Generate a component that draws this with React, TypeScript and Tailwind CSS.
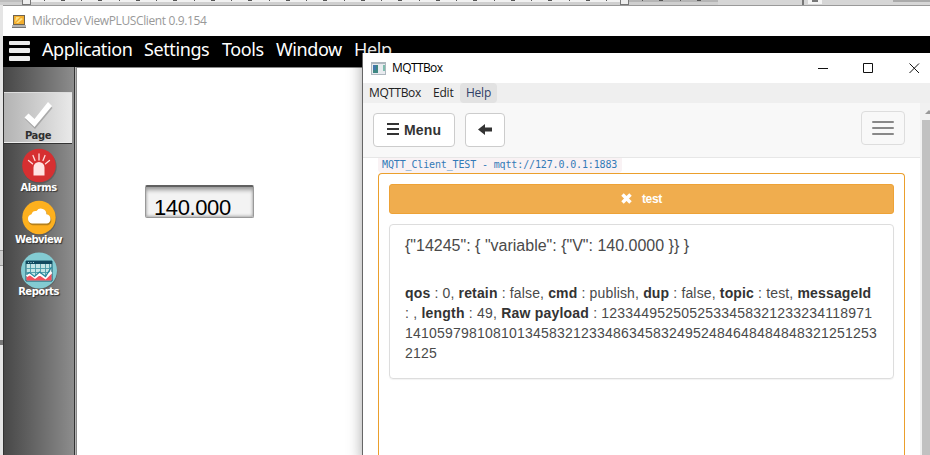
import React from "react";

const segoe = "font-['Open_Sans','Noto_Sans',sans-serif]";
const arial = "font-['Liberation_Sans',Arial,sans-serif]";

function Ruler() {
  const ticks = Array.from({ length: 50 }, (_, i) => i);
  return (
    <div className="relative h-[5px] w-full overflow-hidden bg-[#cfcfcf]">
      <div className="flex h-[2px] gap-[16.25px] bg-[#f1f1f1] pl-[6px]">
        {ticks.map((i) => (
          <i key={i} className={i % 2 ? "h-px w-[4px] shrink-0 bg-[#555]" : "h-px w-px shrink-0 bg-[#555]"} />
        ))}
      </div>
      <div className="absolute left-0 top-0 h-[2px] w-[26px] bg-[#bdbdbd]" />
      <div className="absolute left-[22px] top-0 h-[5px] w-[9px] border border-t-0 border-[#777] bg-[#eee]" />
      <div className="absolute left-[629px] top-0 flex h-[2px] w-[90px] gap-[16.25px] bg-[#b5b5b5] pl-[13px]">
        <i className="h-px w-px bg-[#555]" /><i className="h-px w-[4px] bg-[#555]" /><i className="h-px w-px bg-[#555]" /><i className="h-px w-[4px] bg-[#555]" />
      </div>
      <div className="absolute left-[718px] top-0 h-[5px] w-[212px] bg-[#d6d6d6]" />
      <div className="absolute left-[620px] top-0 h-[5px] w-[9px] border border-t-0 border-[#777] bg-[#eee]" />
      <div className="absolute left-[802px] top-0 h-[5px] w-[2px] bg-[#777]" />
      <div className="absolute left-[808px] top-0 h-[4px] w-[14px] bg-[#f5f5f5]" />
      <div className="absolute left-[812px] top-0 h-[2px] w-[6px] bg-[#777]" />
      <div className="absolute left-[893px] top-0 h-[2px] w-[37px] bg-[#aaa]" />
    </div>
  );
}

function AlarmIcon() {
  return (
    <svg className="h-[36px] w-[36px]" viewBox="0 0 36 36">
      <circle cx="18.7" cy="18.8" r="17" fill="#444" opacity=".45" />
      <circle cx="18" cy="17.5" r="16.8" fill="#d62f31" />
      <path d="M12.5 27.5V19.5a5.5 5.5 0 0 1 11 0v8z" fill="#ffe3e3" />
      <g stroke="#ffdede" strokeWidth="1.3" strokeLinecap="round">
        <path d="M18 6v6M12 7.5l2 5M24 7.5l-2 5M7.5 12.5l4 3.3M28.5 12.5l-4 3.3" />
      </g>
    </svg>
  );
}

function CloudIcon() {
  return (
    <svg className="h-[36px] w-[36px]" viewBox="0 0 36 36">
      <circle cx="18.7" cy="18.8" r="16.6" fill="#444" opacity=".45" />
      <circle cx="18" cy="17.5" r="16.7" fill="#fdb01e" />
      <path d="M11 24.5a5 5 0 0 1-.5-9.8 4.5 4.5 0 0 1 5-3.2 5.5 5.5 0 0 1 10 3 5.2 5.2 0 0 1 .5 10z" fill="#7a5a1a" opacity=".55" transform="translate(.8 .8)" />
      <path d="M11 23.5a4.7 4.7 0 0 1-.5-9.2 4.5 4.5 0 0 1 5-3.3 5.5 5.5 0 0 1 10 3.3 4.7 4.7 0 0 1 .5 9.2z" fill="#fff" />
    </svg>
  );
}

function ChartIcon() {
  return (
    <svg className="h-[38px] w-[38px]" viewBox="0 0 38 38">
      <circle cx="19.5" cy="20" r="17.8" fill="#444" opacity=".4" />
      <circle cx="19" cy="18.5" r="18" fill="#83cbd2" />
      <path d="M6 9h26v20H6z" fill="#c5e6e6" stroke="#17566b" />
      <path d="M6 9h26v3H6z" fill="#124b60" />
      <path d="M8 10.5h1M10.5 10.5h1M13 10.5h1" stroke="#9bd2da" />
      <path d="M10.5 12v16M15.5 12v16M20.5 12v16M25.5 12v16M29.5 12v16M6 16.5h26M6 20.5h26M6 24.5h26" stroke="#4a9ba8" strokeWidth=".9" />
      <path d="M6.5 28.5v-4l3.5-1.5 5 3 4.5-2.5 6 3 6-6v8z" fill="#f2505c" />
      <path d="M6.5 24l3.5-2 5 3.5 4.5-3.5 6 4 6-6" fill="none" stroke="#fff" strokeWidth="2.5" />
      <path d="M6.5 22.5l3-2 5 4 5-4.5 6 4.5 6-9.5" fill="none" stroke="#27879c" strokeWidth="1.3" />
    </svg>
  );
}

function SideItem({ label, children }: { label: string; children: React.ReactNode }) {
  return (
    <div className="flex h-[52px] w-[69px] flex-col items-center">
      <div className="flex h-[34px] items-start justify-center">{children}</div>
      <span className="z-10 text-[10px] font-bold leading-[12px] tracking-[-0.5px] text-white [text-shadow:1px_1px_1px_#333]">{label}</span>
    </div>
  );
}

function Sidebar() {
  return (
    <aside className="flex w-[73px] shrink-0 border-r border-[#b5b5b5] font-['DejaVu_Sans',sans-serif]">
      <div className="flex flex-1 flex-col border-l border-r border-l-[#333] border-r-[#333] bg-linear-to-r from-[#484848] to-[#8d8d8d]">
        <div className="h-[25px]" />
        <div className="flex h-[51px] w-[68px] flex-col items-center border-t border-b border-t-[#ddd] border-b-[#eee] bg-linear-to-r from-[#b3b3b3] to-[#e9e9e9]">
          <svg className="mt-[7px] h-[30px] w-[30px] shrink-0" viewBox="0 0 30 30">
            <path d="M1.5 18l4-4 5.5 6L25 3l4 4-17.5 21z" fill="#777" opacity=".45" transform="translate(.5 1)" />
            <path d="M1.5 17.5l4-4 6 5.5L25 2l4 4-17.5 21z" fill="#fff" />
          </svg>
          <span className="text-[10px] font-bold leading-[12px] tracking-[-0.4px] text-[#303030]">Page</span>
        </div>
        <div className="h-[5px] w-[68px] border-t border-[#333]" />
        <SideItem label="Alarms"><AlarmIcon /></SideItem>
        <SideItem label="Webview"><CloudIcon /></SideItem>
        <SideItem label="Reports"><ChartIcon /></SideItem>
      </div>
    </aside>
  );
}

function ClientWindow() {
  return (
    <section className="absolute left-[3px] top-[5px] flex h-[450px] w-[927px] flex-col border-t border-[#999] bg-white">
      <header className="flex h-[30px] shrink-0 items-center pl-[9px]">
        <svg className="h-[13px] w-[14px]" viewBox="0 0 14 13">
          <path d="M1 0h12v10H1z" fill="#6f6451" />
          <path d="M2 1h10v8H2z" fill="#f3ae2e" />
          <path d="M4 2h4L3 7zM9 3l2 1-5 4H4z" fill="#ffe184" />
          <path d="M0 10h14v2H0z" fill="#b3b3b3" /><path d="M0 12h14v1H0z" fill="#777" />
        </svg>
        <span className={`${segoe} ml-[6px] whitespace-nowrap text-[12px] tracking-[-0.38px] text-[#999]`}>Mikrodev ViewPLUSClient 0.9.154</span>
      </header>
      <nav className="flex h-[31px] shrink-0 bg-black pl-[6px] font-['Noto_Sans',sans-serif] text-[18px] leading-[26px] text-white">
        <div className="mt-[5px] flex w-[33px] flex-col gap-[3px]">
          <i className="h-[4px] w-[21px] rounded-[1px] bg-[#ededed]" />
          <i className="h-[5px] w-[21px] rounded-[1px] bg-[#ededed]" />
          <i className="h-[5px] w-[21px] rounded-[1px] bg-[#ededed]" />
        </div>
        <span className="w-[102px] tracking-[-0.4px]">Application</span>
        <span className="w-[78px] tracking-[-0.4px]">Settings</span>
        <span className="w-[54px] tracking-[-0.4px]">Tools</span>
        <span className="w-[78px] tracking-[-0.4px]">Window</span>
        <span className="tracking-[-0.4px]">Help</span>
      </nav>
      <div className="flex flex-1">
        <Sidebar />
        <main className="flex flex-1 items-start border-l border-t border-[#888] bg-white pl-[68px] pt-[117px]">
          <div className={`${arial} h-[33px] w-[109px] rounded-[2px] border border-t-2 border-[#999] border-t-[#606060] bg-[#f3f3f3] pl-[8px] text-[22px] leading-[41px] tracking-[-0.4px] text-black shadow-[inset_0_4px_4px_-1px_#999,inset_0_-1px_3px_#aaa]`}>140.000</div>
        </main>
      </div>
    </section>
  );
}

function MessageCard() {
  return (
    <article className="mt-[10px] h-[155px] rounded-[4px] border border-[#ddd] px-[15px] pt-[10px] text-[#4a4a4a] shadow-[0_1px_1px_rgba(0,0,0,.05)]">
      <p className="whitespace-nowrap text-[16px] leading-[22px]">{'{"14245": { "variable": {"V": 140.0000 }} }'}</p>
      <div className="mt-[26px] whitespace-nowrap text-[14px] leading-[20px] [&_b]:text-[#333]">
        <p className="tracking-[0.155px]"><b>qos</b> : 0, <b>retain</b> : false, <b>cmd</b> : publish, <b>dup</b> : false, <b>topic</b> : test, <b>messageId</b></p>
        <p className="tracking-[0.21px]">: , <b>length</b> : 49, <b>Raw payload</b> : 1233449525052533458321233234118971</p>
        <p className="tracking-[0.215px]">14105979810810134583212334863458324952484648484848321251253</p>
        <p className="tracking-[0.2px]">2125</p>
      </div>
    </article>
  );
}

function MqttWindow() {
  return (
    <section className={`${arial} absolute left-[362px] top-[53px] flex h-[402px] w-[568px] flex-col overflow-hidden border-l border-[#666] bg-white`}>
      <header className="flex h-[30px] shrink-0 items-center pl-[8px] text-black">
        <svg className="h-[13px] w-[15px]" viewBox="0 0 15 13">
          <path d="M0 0h15v13H0z" fill="#aeb7be" /><path d="M1 2h13v10H1z" fill="#e8ebef" />
          <path d="M2 3h5v8H2z" fill="#3e8783" /><path d="M2 3h3v5H2z" fill="#4378ab" />
          <path d="M12 3h2v6h-2z" fill="#7ebcad" />
        </svg>
        <span className={`${segoe} ml-[6px] text-[12px] tracking-[-0.6px]`}>MQTTBox</span>
        <svg className="ml-auto mr-[10px] h-[11px] w-[102px]" viewBox="0 0 102 11" fill="none" stroke="#111">
          <path d="M0 5.5h10M45.5.5h9v9h-9zM91.500.5l9.500 9.500M91.500 10l9.500-9.500" />
        </svg>
      </header>
      <nav className={`${segoe} flex h-[20px] shrink-0 bg-[#efefef] pl-[6px] text-[12px] leading-[20px] text-[#222]`}>
        <span className="w-[64px] tracking-[-0.4px]">MQTTBox</span>
        <span className="w-[27px] tracking-[-0.2px]">Edit</span>
        <span className="w-[37px] rounded bg-[#e2e2e2] text-center tracking-[-0.2px] text-[#304067]">Help</span>
      </nav>
      <div className="flex min-h-0 flex-1">
        <div className="flex min-w-0 flex-1 flex-col">
          <div className="flex h-[55px] shrink-0 items-start border-b border-[#e7e7e7] bg-[#f8f8f8] pl-[10px] pr-[15px] pt-[8px]">
            <button className="mt-[2px] flex h-[34px] w-[82px] items-center rounded-[4px] border border-[#ccc] bg-white pl-[13px] text-[14px] font-bold text-[#333]">
              <svg className="mb-[2px] mr-[5px] h-[12px] w-[12px]" viewBox="0 0 12 12"><path d="M0 1h12M0 6h12M0 11h12" stroke="#333" strokeWidth="2" /></svg>
              <span className="tracking-[0.2px]">Menu</span>
            </button>
            <button className="ml-[10px] mt-[2px] flex h-[34px] w-[40px] items-center justify-center rounded-[4px] border border-[#ccc] bg-white">
              <svg className="mb-[1px] h-[11px] w-[14px]" viewBox="0 0 14 11"><path d="M0 5.5l7-5.5v3.5h7v4H7V11z" fill="#333" /></svg>
            </button>
            <button className="ml-auto flex h-[34px] w-[44px] flex-col items-center justify-center gap-[4px] rounded-[4px] border border-[#ddd]">
              <i className="h-[2px] w-[22px] rounded-[1px] bg-[#888]" /><i className="h-[2px] w-[22px] rounded-[1px] bg-[#888]" /><i className="h-[2px] w-[22px] rounded-[1px] bg-[#888]" />
            </button>
          </div>
          <div className="flex h-[15px] shrink-0 pl-[15px]">
            <code className="h-[15px] w-[244px] whitespace-nowrap rounded-b-[4px] bg-[#f9f2f4] pl-[4px] font-['DejaVu_Sans_Mono',monospace] text-[10px] leading-[13px] tracking-[-0.14px] text-[#337ab7]">MQTT_Client_TEST - mqtt://127.0.0.1:1883</code>
          </div>
          <div className="ml-[15px] mr-[15px] flex-1 rounded-t-[4px] border border-b-0 border-[#eb9f2c] px-[10px] pt-[10px]">
            <button className="flex h-[30px] w-full items-center justify-center rounded-[3px] border border-[#eea236] bg-[#f0ad4e] text-[12px] font-bold text-white">
              <svg className="mb-[2px] mr-[10px] h-[11px] w-[11px]" viewBox="0 0 11 11"><path d="M1.500 1.500l8 8M9.500 1.500l-8 8" stroke="white" strokeWidth="3.500" /></svg>
              <span className="tracking-[-0.3px]">test</span>
            </button>
            <MessageCard />
          </div>
        </div>
        <div className="flex w-[10px] shrink-0 flex-col bg-[#f1f1f1] pl-[2px]">
          <svg className="h-[17px] w-[8px]" viewBox="0 0 8 17"><path d="M3 11l4-4 4 4z" fill="#999" /></svg>
          <div className="flex-1 bg-[#c1c1c1]" />
        </div>
      </div>
    </section>
  );
}

export default function App() {
  return (
    <div className="relative h-[455px] w-[930px] overflow-hidden bg-[#e5e5e5]">
      <Ruler />
      <div className="absolute left-0 top-[250px] h-[16px] w-[3px] border-t border-b border-[#999] bg-[#ccc]" />
      <div className="absolute left-0 top-[340px] h-[5px] w-[3px] bg-[#777]" />
      <ClientWindow />
      <div className="absolute left-[362px] top-[53px] h-[410px] w-[568px] shadow-[0_0_14px_rgba(0,0,0,.35)]" />
      <MqttWindow />
    </div>
  );
}
